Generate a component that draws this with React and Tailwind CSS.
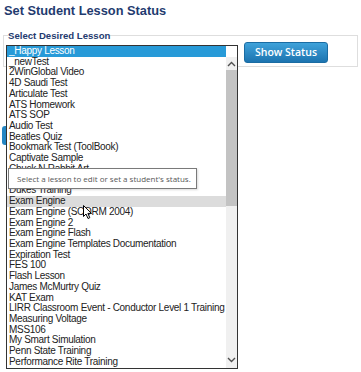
import React from 'react'

const lessons = [
  '_Happy Lesson',
  '_newTest',
  '2WinGlobal Video',
  '4D Saudi Test',
  'Articulate Test',
  'ATS Homework',
  'ATS SOP',
  'Audio Test',
  'Beatles Quiz',
  'Bookmark Test (ToolBook)',
  'Captivate Sample',
  'Chuck N Rabbit Art',
  'Demo Lesson',
  'Dukes Training',
  'Exam Engine',
  'Exam Engine (SCORM 2004)',
  'Exam Engine 2',
  'Exam Engine Flash',
  'Exam Engine Templates Documentation',
  'Expiration Test',
  'FES 100',
  'Flash Lesson',
  'James McMurtry Quiz',
  'KAT Exam',
  'LIRR Classroom Event - Conductor Level 1 Training',
  'Measuring Voltage',
  'MSS106',
  'My Smart Simulation',
  'Penn State Training',
  'Performance Rite Training',
]

function Chevron({ up }) {
  return (
    <svg width="9" height="6" viewBox="0 0 9 6" className="block">
      <path
        d={up ? 'M1 5 L4.5 1.5 L8 5' : 'M1 1 L4.5 4.5 L8 1'}
        fill="none"
        stroke="#505050"
        strokeWidth="1.4"
      />
    </svg>
  )
}

function LessonList() {
  return (
    <div className="absolute left-[-1px] top-[3px] z-10 flex w-[232px] h-[324px] border border-[#333] bg-white">
      {/* Options */}
      <div className="w-[219px] flex flex-col font-['Liberation_Sans',Arial,sans-serif] text-[10px] leading-[10.72px] tracking-[-0.3px] text-[#222]">
        {lessons.map((l, i) => (
          <div
            key={l}
            className={`h-[10.72px] pl-[2px] whitespace-nowrap ${
              i === 0 ? 'bg-[#279ad8] text-white' : i === 14 ? 'bg-[#dcdcdc]' : ''
            }`}
          >
            {l}
          </div>
        ))}
      </div>
      {/* Scrollbar */}
      <div className="flex-1 pt-[11px]">
        <div className="h-full bg-[#f0f0f0] flex flex-col items-center">
          <div className="h-[13px] flex items-center justify-center">
            <Chevron up />
          </div>
          <div className="w-full h-[136px] bg-[#c3c3c3]" />
          <div className="flex-1" />
          <div className="h-[14px] flex items-start justify-center pt-[3px]">
            <Chevron />
          </div>
        </div>
      </div>
    </div>
  )
}

export default function App() {
  return (
    <div className="relative w-[361px] h-[372px] bg-white overflow-hidden font-['Open_Sans',sans-serif]">
      <h1 className="pl-[4px] pt-[1px] font-['Liberation_Sans',Arial,sans-serif] text-[12.8px] leading-[20px] font-bold text-[#1f3b6f]">
        Set Student Lesson Status
      </h1>

      <fieldset className="mx-[3px] mt-[8px] border border-[#dedede] pl-[3px] pr-[3px] pb-[3px]">
        <legend className="ml-[1px] font-['Liberation_Sans',Arial,sans-serif] text-[9.6px] leading-[13px] font-bold text-[#1f3b6f]">
          Select Desired Lesson
        </legend>
        <div className="flex items-start">
          <div className="relative w-[232px] h-[21px]">
            <LessonList />
          </div>
          <button
            type="button"
            className="ml-[5px] w-[84px] h-[21px] rounded-[3px] border border-[#1a6ca3] bg-gradient-to-b from-[#3fa2da] to-[#1c74b0] text-white text-[10.5px] leading-[19px] font-semibold"
          >
            Show Status
          </button>
        </div>
      </fieldset>

      {/* Page content mostly hidden under the open list */}
      <div className="pl-[2px] pt-[59px]">
        <div className="w-[60px] h-[19px] rounded-[3px] bg-[#2386c4]" />
      </div>

      {/* Tooltip */}
      <div className="absolute left-[8px] top-[168px] z-20 w-[189px] h-[21px] border border-[#7a7a7a] bg-white shadow-[1px_1px_2px_rgba(0,0,0,0.15)] pl-[8px] text-[8px] leading-[19px] text-[#575757] whitespace-nowrap">
        Select a lesson to edit or set a student's status.
      </div>

      {/* Mouse cursor */}
      <svg className="absolute left-[83px] top-[205px] z-30" width="10" height="15" viewBox="0 0 10 15">
        <path d="M0.5 0.5 L0.5 11.5 L3 9 L5 13.5 L6.8 12.7 L4.9 8.4 L8.5 8.4 Z" fill="#fff" stroke="#000" strokeWidth="1" strokeLinejoin="round" />
      </svg>
    </div>
  )
}
